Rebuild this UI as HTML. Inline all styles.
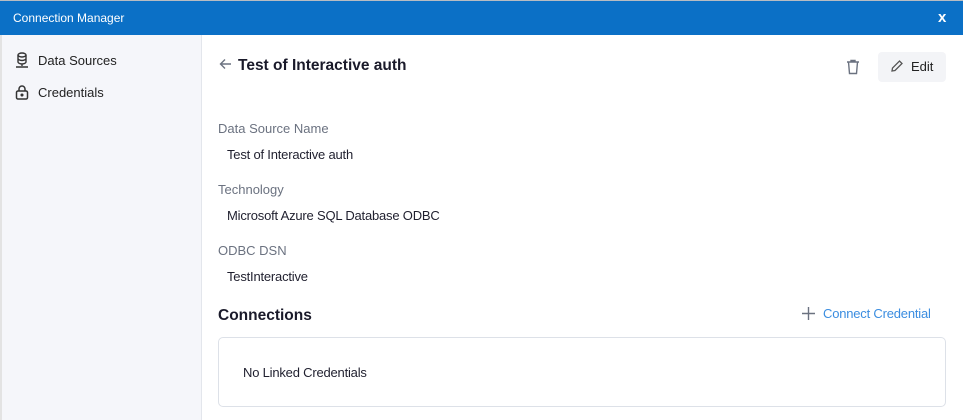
<!DOCTYPE html>
<html><head><style>
body{margin:0;width:963px;height:420px;overflow:hidden;font-family:"Liberation Sans",sans-serif;background:#fff;position:relative}
.a{position:absolute;white-space:nowrap}
.lbl{color:#6b7280;font-size:13px}
.val{color:#1f1f2e;font-size:13px;letter-spacing:-0.2px}
</style></head><body>
<div class="a" style="left:0;top:0;width:963px;height:1px;background:#b8bcc2"></div>
<div class="a" style="left:0;top:1px;width:963px;height:34px;background:#0b70c6"></div>
<div class="a" style="left:13px;top:11px;color:#fff;font-size:12px">Connection Manager</div>
<div class="a" style="left:938px;top:9px;color:#fff;font-size:15px;font-weight:bold">x</div>
<div class="a" style="left:0;top:35px;width:2px;height:385px;background:#e3e3e3"></div>
<div class="a" style="left:2px;top:35px;width:199px;height:385px;background:#f5f6fa;border-right:1px solid #e3e6ec"></div>
<svg class="a" style="left:15px;top:52px" width="14" height="16" viewBox="0 0 14 16" fill="none" stroke="#333" stroke-width="1.4"><ellipse cx="7" cy="3" rx="4" ry="2"/><path d="M3 3v7c0 1 2 2 4 2s4-1 4-2V3M3 6.5c0 1 2 2 4 2s4-1 4-2M7 12v2M1 15h12"/></svg>
<div class="a" style="left:38px;top:53px;font-size:13px;color:#222">Data Sources</div>
<svg class="a" style="left:15px;top:84px" width="14" height="16" viewBox="0 0 14 16" fill="none" stroke="#333" stroke-width="1.5"><rect x="1.5" y="7" width="11" height="8" rx="1.5"/><path d="M4 7V5a3 3 0 0 1 6 0v2"/><circle cx="7" cy="11" r=".8" fill="#333"/></svg>
<div class="a" style="left:38px;top:85px;font-size:13px;color:#222">Credentials</div>
<svg class="a" style="left:219px;top:58px" width="13" height="12" viewBox="0 0 13 12" fill="none" stroke="#6b7280" stroke-width="1.4"><path d="M12 6H1.5M6 1.5L1.5 6 6 10.5"/></svg>
<div class="a" style="left:238px;top:57px;color:#1a1a2a;font-size:15.5px;font-weight:bold">Test of Interactive auth</div>
<svg class="a" style="left:846px;top:59px" width="14" height="16" viewBox="0 0 14 16" fill="none" stroke="#6b7280" stroke-width="1.4"><path d="M1 3h12M5 3V1.5h4V3M2.5 3l1 11.5h7l1-11.5"/></svg>
<div class="a" style="left:878px;top:52px;width:68px;height:30px;background:#f3f4f7;border-radius:4px"></div>
<svg class="a" style="left:890px;top:59px" width="14" height="14" viewBox="0 0 14 14" fill="none" stroke="#555" stroke-width="1.3"><path d="M2 12l.5-3L9.5 2l2.5 2.5L5 11.5z"/></svg>
<div class="a" style="left:911px;top:59px;font-size:13px;color:#222">Edit</div>
<div class="a lbl" style="left:218px;top:121px">Data Source Name</div>
<div class="a val" style="left:227px;top:147px">Test of Interactive auth</div>
<div class="a lbl" style="left:218px;top:182px">Technology</div>
<div class="a val" style="left:227px;top:208px">Microsoft Azure SQL Database ODBC</div>
<div class="a lbl" style="left:218px;top:243px">ODBC DSN</div>
<div class="a val" style="left:227px;top:269px">TestInteractive</div>
<div class="a" style="left:218px;top:307px;font-size:15.5px;font-weight:bold;color:#1a1a2a">Connections</div>
<svg class="a" style="left:802px;top:307px" width="13" height="13" viewBox="0 0 13 13" stroke="#6b7280" stroke-width="1.4"><path d="M6.5 0v13M0 6.5h13"/></svg>
<div class="a" style="left:823px;top:306px;font-size:13px;color:#3b8de0;letter-spacing:-0.2px">Connect Credential</div>
<div class="a" style="left:218px;top:337px;width:726px;height:68px;border:1px solid #dde1e8;border-radius:5px"></div>
<div class="a val" style="left:243px;top:365px">No Linked Credentials</div>
</body></html>
